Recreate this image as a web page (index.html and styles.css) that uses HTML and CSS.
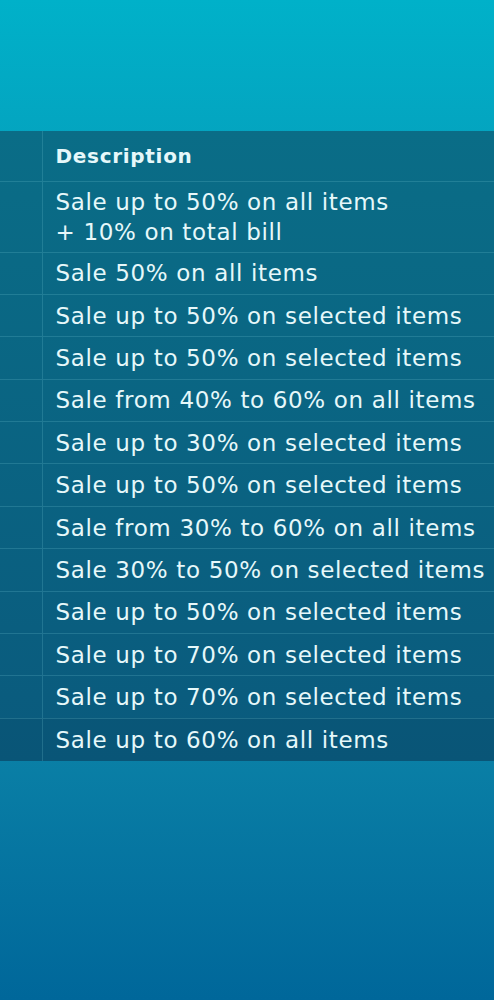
FILE: index.html
```html
<!DOCTYPE html>
<html lang="en">
<head>
  <meta charset="UTF-8">
  <title>Sale offers</title>
  <link rel="stylesheet" href="styles.css">
</head>
<body>
<div class="page">
  <table class="offers">
    <thead>
      <tr><th class="num"></th><th>Description</th></tr>
    </thead>
    <tbody>
      <tr><td class="num"></td><td>Sale up to 50% on all items<br>+ 10% on total bill</td></tr>
      <tr><td class="num"></td><td>Sale 50% on all items</td></tr>
      <tr><td class="num"></td><td>Sale up to 50% on selected items</td></tr>
      <tr><td class="num"></td><td>Sale up to 50% on selected items</td></tr>
      <tr><td class="num"></td><td>Sale from 40% to 60% on all items</td></tr>
      <tr><td class="num"></td><td>Sale up to 30% on selected items</td></tr>
      <tr><td class="num"></td><td>Sale up to 50% on selected items</td></tr>
      <tr><td class="num"></td><td>Sale from 30% to 60% on all items</td></tr>
      <tr><td class="num"></td><td>Sale 30% to 50% on selected items</td></tr>
      <tr><td class="num"></td><td>Sale up to 50% on selected items</td></tr>
      <tr><td class="num"></td><td>Sale up to 70% on selected items</td></tr>
      <tr><td class="num"></td><td>Sale up to 70% on selected items</td></tr>
      <tr><td class="num"></td><td>Sale up to 60% on all items</td></tr>
    </tbody>
  </table>
</div>
</body>
</html>
```

FILE: styles.css
```css
* { box-sizing: border-box; }
body {
  margin: 0;
  padding: 0;
  font-family: 'DejaVu Sans', sans-serif;
}
.page {
  height: 1000px;
  padding-top: 131px;
  background: linear-gradient(to bottom, #00b1c9 0%, #04a3bf 15%, #0a80a6 75%, #00679a 100%);
  overflow: hidden;
}
.offers {
  width: 100%;
  border-collapse: collapse;
  background: linear-gradient(to bottom, #0a6d87, #0a5a7d);
  color: #e6f8fa;
}
.offers th,
.offers td {
  text-align: left;
  padding: 5px 0 5px 13px;
  border-bottom: 1px solid rgba(120, 200, 215, 0.22);
  border-left: 1px solid rgba(120, 200, 215, 0.22);
  font-size: 23px;
  line-height: 30px;
  letter-spacing: 0.65px;
  white-space: nowrap;
}
.offers th {
  height: 50px;
  font-size: 20px;
  font-weight: 600;
  letter-spacing: 0.7px;
}
.offers td {
  height: 42.4px;
}
.offers .num {
  width: 42px;
  padding: 0;
  border-left: none;
}
.offers tbody tr:last-child td {
  border-bottom: none;
  background: rgba(0, 20, 40, 0.06);
}
```
